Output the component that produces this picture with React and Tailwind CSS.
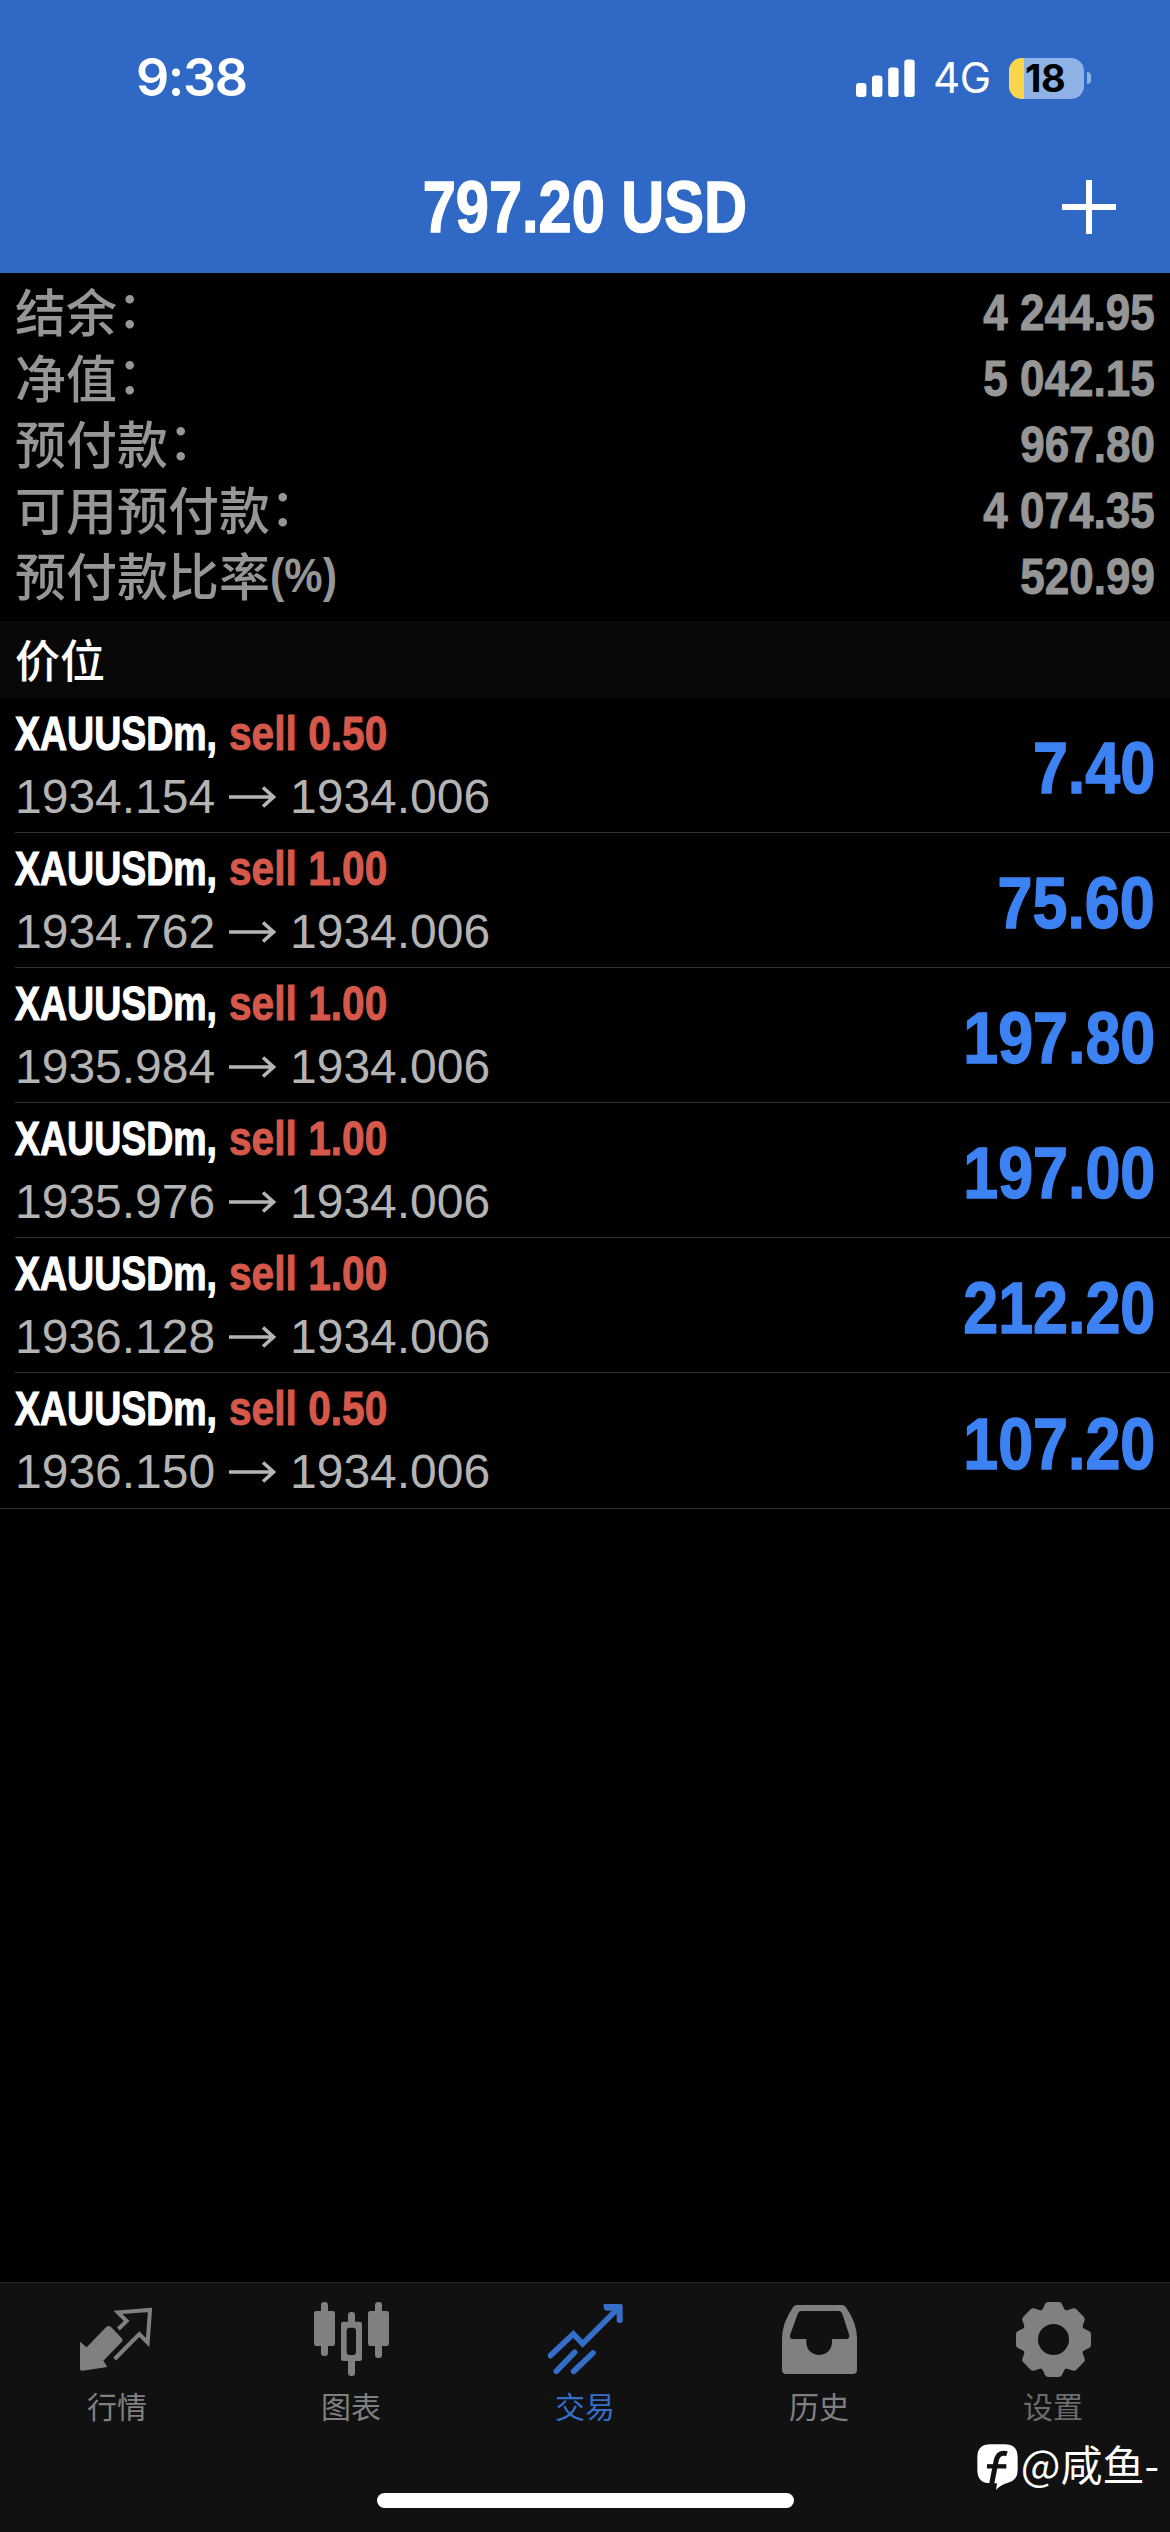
import React from "react";

const summary = [
  { label: "结余", colon: true, value: "4 244.95" },
  { label: "净值", colon: true, value: "5 042.15" },
  { label: "预付款", colon: true, value: "967.80" },
  { label: "可用预付款", colon: true, value: "4 074.35" },
  { label: "预付款比率", suffix: "(%)", value: "520.99" },
];

const positions = [
  { lots: "0.50", open: "1934.154", now: "1934.006", profit: "7.40" },
  { lots: "1.00", open: "1934.762", now: "1934.006", profit: "75.60" },
  { lots: "1.00", open: "1935.984", now: "1934.006", profit: "197.80" },
  { lots: "1.00", open: "1935.976", now: "1934.006", profit: "197.00" },
  { lots: "1.00", open: "1936.128", now: "1934.006", profit: "212.20" },
  { lots: "0.50", open: "1936.150", now: "1934.006", profit: "107.20" },
];

function SignalIcon() {
  return (
    <svg className="h-[38px] w-[59px]" viewBox="0 0 59 38" fill="#fff">
      <rect x="0" y="24" width="10.4" height="14" rx="3" />
      <rect x="16" y="16.5" width="10.4" height="21.5" rx="3" />
      <rect x="32.2" y="8.5" width="10.4" height="29.5" rx="3" />
      <rect x="48.3" y="0.5" width="10.4" height="37.5" rx="3" />
    </svg>
  );
}

function Battery() {
  return (
    <div className="flex items-center gap-[3px]">
      <div className="flex h-[41px] w-[75px] rounded-[13px] bg-[#8fb3e6]">
        <div className="w-[15px] shrink-0 rounded-l-[13px] bg-[#fbd64b]" />
        <span className="pl-[1px] font-['Inter'] text-[38px] leading-[41px] font-bold tracking-[-0.5px] text-black">18</span>
      </div>
      <div className="h-[12px] w-[4px] rounded-r-full bg-[#8fb3e6]" />
    </div>
  );
}

function QuotesIcon() {
  return (
    <svg className="h-[76px] w-[75px]" viewBox="240 93 225 228">
      <path d="M240 215 L260 232 L318 172 Q326 164 334 172 L364 203 Q371 210 364 217 L310 272 L322 291 L247 302 Q240 303 240 296 Z" fill="#808080" />
      <path d="M355 177 L380 153 L354 127 L450 120 L443 218 L418 192 L344 267" fill="none" stroke="#808080" strokeWidth="12" />
    </svg>
  );
}

function ChartIcon() {
  return (
    <svg className="h-[76px] w-[75px]" viewBox="939 93 225 228" fill="#808080">
      <rect x="939" y="123" width="63" height="105" rx="7" />
      <rect x="960" y="96" width="21" height="162" rx="9" />
      <rect x="1101" y="123" width="63" height="105" rx="7" />
      <rect x="1122" y="96" width="21" height="168" rx="9" />
      <rect x="1041" y="126" width="21" height="40" rx="9" />
      <rect x="1041" y="262" width="21" height="56" rx="9" />
      <path fillRule="evenodd" d="M1027 155H1076Q1083 155 1083 162V266Q1083 273 1076 273H1027Q1020 273 1020 266V162Q1020 155 1027 155ZM1047 173Q1037 173 1037 183V245Q1037 255 1047 255H1055Q1065 255 1065 245V183Q1065 173 1055 173Z" />
    </svg>
  );
}

function TradeIcon() {
  return (
    <svg className="h-[76px] w-[75px]" viewBox="292 93 225 228" fill="none" stroke="#356ec9" strokeWidth="17" strokeLinecap="round">
      <path d="M299 257 L368 192 L396 221 L500 117" strokeLinejoin="miter" />
      <path d="M459 102H511Q516 102 516 107V151Q516 159 507 159Q498 159 498 151V122H467Q459 120 459 110Z" fill="#356ec9" stroke="none" />
      <path d="M317 304 L372 247" />
      <path d="M369 304 L427 249" />
    </svg>
  );
}

function HistoryIcon() {
  return (
    <svg className="h-[76px] w-[75px]" viewBox="993 93 225 228" fill="#808080">
      <path
        fillRule="evenodd"
        d="M1038 105H1172Q1180 105 1185 112Q1218 160 1218 205V299Q1218 312 1205 312H1006Q993 312 993 299V205Q993 160 1026 112Q1031 105 1038 105ZM1052 123Q1045 123 1041 130L1018 193Q1013 207 1026 207H1066V216C1066 240 1084 255 1104 255C1125 255 1143 240 1143 216V207H1186Q1198 207 1194 193L1174 132Q1171 123 1162 123Z"
      />
    </svg>
  );
}

function SettingsIcon() {
  return (
    <svg className="h-[76px] w-[75px]" viewBox="435 93 225 228" fill="#808080">
      <circle cx="547.5" cy="208.5" r="70" fill="none" stroke="#808080" strokeWidth="47" />
      {[0, 45, 90, 135, 180, 225, 270, 315].map((a) => (
        <path key={a} transform={`rotate(${a} 547.5 208.5)`} d="M505 126Q513 122 517 113L522 102Q525 96 532 96H563Q570 96 573 102L578 113Q582 122 590 126L580 145H515Z" />
      ))}
    </svg>
  );
}

const tabs = [
  { label: "行情", Icon: QuotesIcon, color: "text-[#808080]" },
  { label: "图表", Icon: ChartIcon, color: "text-[#808080]" },
  { label: "交易", Icon: TradeIcon, color: "text-[#356ec9]" },
  { label: "历史", Icon: HistoryIcon, color: "text-[#808080]" },
  { label: "设置", Icon: SettingsIcon, color: "text-[#6c6c6c]" },
];

function Header() {
  return (
    <header className="h-[273px] bg-[#2f68c5] text-white">
      <div className="flex h-[156px] items-center justify-between pr-[79px] pl-[136px]">
        <span className="font-['Inter'] text-[52px] leading-none font-semibold tracking-[-1.4px]">9:38</span>
        <div className="flex items-center">
          <SignalIcon />
          <span className="ml-[18px] w-[76px] font-['Inter'] text-[42px] leading-none tracking-[-0.5px]">4G</span>
          <Battery />
        </div>
      </div>
      <div className="grid h-[101px] grid-cols-[1fr_auto_1fr] items-center">
        <span />
        <h1 className="scale-x-[0.815] text-[73px] leading-none font-bold whitespace-nowrap [-webkit-text-stroke:1.5px]">797.20 USD</h1>
        <svg className="mr-[54px] h-[54px] w-[54px] justify-self-end" viewBox="0 0 54 54" stroke="#fff" strokeWidth="6">
          <path d="M27 0V54M0 27H54" />
        </svg>
      </div>
    </header>
  );
}

function Position({ item, last }) {
  return (
    <li className={last ? "h-[136px] border-b border-[#333] pl-[15px]" : "h-[135px] pl-[15px]"}>
      <div className={last ? "flex h-full items-center justify-between pr-[15px]" : "flex h-full items-center justify-between border-b border-[#333] pr-[15px]"}>
        <div>
          <div className="flex h-[60px] items-center text-[49px] leading-none font-bold whitespace-nowrap">
            <span className="w-[214px]">
              <span className="inline-block origin-left scale-x-[0.765] text-white [-webkit-text-stroke:1.2px]">XAUUSDm,</span>
            </span>
            <span className="origin-left scale-x-[0.83] text-[#d5584a] [-webkit-text-stroke:1px]">sell {item.lots}</span>
          </div>
          <div className="flex h-[64px] items-center pt-[3px] text-[48px] leading-none text-[#b4b4b4]">
            <span className="w-[214px]">{item.open}</span>
            <svg className="h-[22px] w-[47px]" viewBox="0 0 47 22" fill="none" stroke="#b4b4b4" strokeWidth="3.6">
              <path d="M0 11H44M34 1.5L44.5 11L34 20.5" />
            </svg>
            <span className="ml-[14px]">{item.now}</span>
          </div>
        </div>
        <span className="origin-right scale-x-[0.86] pt-[5px] text-[73px] leading-none font-bold text-[#3c82f3] [-webkit-text-stroke:1.5px]">{item.profit}</span>
      </div>
    </li>
  );
}

export default function App() {
  return (
    <div className="flex h-[2532px] w-[1170px] flex-col overflow-hidden bg-black font-['Liberation_Sans','Noto_Sans_CJK_SC',sans-serif]">
      <Header />
      <dl className="h-[348px] px-[15px] pt-[4px] text-[#969696]">
        {summary.map(({ label, colon, suffix, value }) => (
          <div key={label} className="flex h-[66px] items-center justify-between">
            <dt className="flex font-['Noto_Sans_CJK_SC',sans-serif] text-[51px] leading-[66px] font-medium">
              {label}
              {colon && <span className="-mt-[4px]">：</span>}
              {suffix && <span className="origin-left scale-x-[0.88] pt-[3px] font-['Liberation_Sans'] text-[49px] leading-[63px] font-bold">{suffix}</span>}
            </dt>
            <dd className="origin-right scale-x-[0.88] pt-[5px] text-[50px] leading-none font-bold [-webkit-text-stroke:1px]">{value}</dd>
          </div>
        ))}
      </dl>
      <h2 className="h-[77px] bg-[#080808] px-[15px] font-['Noto_Sans_CJK_SC',sans-serif] text-[45px] leading-[75px] font-medium text-white">价位</h2>
      <ul>
        {positions.map((item, i) => (
          <Position key={i} item={item} last={i === positions.length - 1} />
        ))}
      </ul>
      <footer className="relative mt-auto h-[250px] border-t border-[#2a2a2a] bg-[#111]">
        <nav className="grid grid-cols-5 pt-[18px]">
          {tabs.map(({ label, Icon, color }) => (
            <div key={label} className={`flex flex-col items-center ${color}`}>
              <Icon />
              <span className="mt-[6px] font-['Noto_Sans_CJK_SC',sans-serif] text-[30px] leading-[44px]">{label}</span>
            </div>
          ))}
        </nav>
        <div className="absolute top-[153px] right-[11px] flex items-center gap-[3px] text-white">
          <svg className="mt-[8px] h-[46px] w-[41px]" viewBox="315 530 123 138">
            <path d="M355 531H398Q437 531 437 570V608Q437 640 408 646Q386 652 372 668L375 648H355Q316 648 316 608V570Q316 531 355 531Z" fill="#fff" />
            <path d="M405 559C383 553 375 566 372 583L358 655" fill="none" stroke="#111" strokeWidth="15" />
            <path d="M345 597H403" stroke="#111" strokeWidth="13" />
          </svg>
          <span className="font-['Noto_Sans_CJK_SC',sans-serif] text-[42px] leading-[50px]">@咸鱼-</span>
        </div>
        <div className="absolute bottom-[24px] left-[377px] h-[15px] w-[417px] rounded-full bg-white" />
      </footer>
    </div>
  );
}
